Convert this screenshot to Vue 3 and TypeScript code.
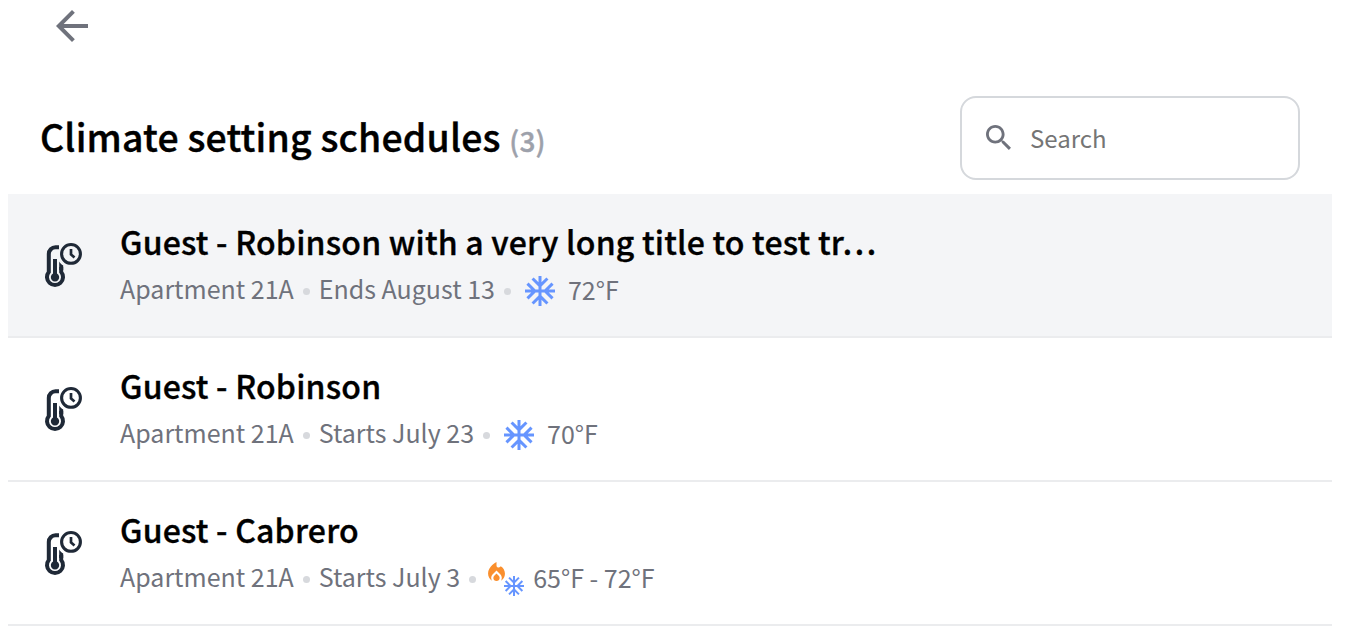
<script setup lang="ts">
import { ref } from 'vue'

interface Schedule {
  id: number
  title: string
  device: string
  timing: string
  mode: 'cool' | 'heatcool'
  temperature: string
  selected?: boolean
}

const query = ref('')

const schedules: Schedule[] = [
  { id: 1, title: 'Guest - Robinson with a very long title to test tr…', device: 'Apartment 21A', timing: 'Ends August 13', mode: 'cool', temperature: '72°F', selected: true },
  { id: 2, title: 'Guest - Robinson', device: 'Apartment 21A', timing: 'Starts July 23', mode: 'cool', temperature: '70°F' },
  { id: 3, title: 'Guest - Cabrero', device: 'Apartment 21A', timing: 'Starts July 3', mode: 'heatcool', temperature: '65°F - 72°F' },
]

const snowflake =
  'M22 11h-4.17l3.24-3.24-1.41-1.42L15 11h-2V9l4.66-4.66-1.42-1.41L13 6.17V2h-2v4.17L7.76 2.93 6.34 4.34 11 9v2H9L4.34 6.34 2.93 7.76 6.17 11H2v2h4.17l-3.24 3.24 1.41 1.42L9 13h2v2l-4.66 4.66 1.42 1.41L11 17.83V22h2v-4.17l3.24 3.24 1.42-1.41L13 15v-2h2l4.66 4.66 1.41-1.42L17.83 13H22z'
</script>

<template>
  <main class="page">
    <nav class="topbar">
      <button class="back" aria-label="Back">
        <svg width="48" height="48" viewBox="0 0 24 24"><path d="M20 11H7.83l5.59-5.59L12 4l-8 8 8 8 1.41-1.41L7.83 13H20v-2z" /></svg>
      </button>
    </nav>

    <header class="header">
      <h1 class="heading">Climate setting schedules <span class="count">(3)</span></h1>
      <label class="search">
        <svg class="search-icon" width="25" height="25" viewBox="3 3 17.5 17.5"><path d="M15.5 14h-.79l-.28-.27C15.41 12.59 16 11.11 16 9.5 16 5.91 13.09 3 9.5 3S3 5.91 3 9.5 5.91 16 9.5 16c1.61 0 3.09-.59 4.23-1.57l.27.28v.79l5 4.99L20.49 19l-4.99-5zm-6 0C7.01 14 5 11.99 5 9.5S7.01 5 9.5 5 14 7.01 14 9.5 11.99 14 9.5 14z" /></svg>
        <input v-model="query" class="search-input" type="text" placeholder="Search" />
      </label>
    </header>

    <ul class="list">
      <li v-for="s in schedules" :key="s.id" class="row" :class="{ selected: s.selected }">
        <svg class="device-icon" width="48" height="48" viewBox="0 0 48 48" fill="none">
          <path d="M19 6.3H15.5A6.7 6.7 0 0 0 8.8 13V31A8 8 0 1 0 21.2 31V26" stroke="#1f2937" stroke-width="4" />
          <path d="M19.2 20.5C20.2 22.3 21.5 23.6 23.2 24.6V29H19.2Z" fill="#1f2937" />
          <path d="M13 18H17V32.6A4.2 4.2 0 1 1 13 32.6Z" fill="#1f2937" />
          <circle cx="31" cy="12.9" r="9.4" stroke="#1f2937" stroke-width="3.1" />
          <path d="M31 8V13.4L34.5 16.5" stroke="#1f2937" stroke-width="2.7" />
        </svg>
        <div class="content">
          <h2 class="title">{{ s.title }}</h2>
          <div class="meta">
            <span class="label">{{ s.device }}</span>
            <i class="dot"></i>
            <span class="label">{{ s.timing }}</span>
            <i class="dot"></i>
            <svg v-if="s.mode === 'cool'" class="cool" width="30" height="30" viewBox="2 2 20 20"><path :d="snowflake" fill="#6695ff" /></svg>
            <span v-else class="heatcool">
              <svg class="flame" width="17" height="19" viewBox="4 2 16 18"><path fill="#fa8f2d" d="M16 6l-.44.55C14.38 8.02 12 7.19 12 5.3V2S4 6 4 13c0 2.92 1.56 5.47 3.89 6.86-.56-.79-.89-1.76-.89-2.8 0-1.32.52-2.56 1.47-3.5L12 10.1l3.53 3.47c.95.93 1.47 2.17 1.47 3.5 0 1.02-.31 1.96-.85 2.75 1.89-1.15 3.29-3.06 3.71-5.3.66-3.55-1.07-6.9-3.86-8.52zM12 12.9l-2.13 2.09c-.56.56-.87 1.29-.87 2.07C9 18.68 10.35 20 12 20s3-1.32 3-2.94c0-.78-.31-1.52-.87-2.07L12 12.9z" /></svg>
              <svg class="flake" width="20" height="20" viewBox="2 2 20 20"><path :d="snowflake" fill="#6695ff" /></svg>
            </span>
            <span class="temperature">{{ s.temperature }}</span>
          </div>
        </div>
      </li>
    </ul>
  </main>
</template>

<style>
body {
  margin: 0;
  background: #fff;
}
</style>

<style scoped>
.page {
  box-sizing: border-box;
  width: 1356px;
  height: 630px;
  overflow: hidden;
  padding: 2px 24px 0 8px;
  background: #fff;
  color: #000;
  font-family: "Noto Sans CJK SC", "Noto Sans", sans-serif;
}
.topbar {
  height: 94px;
  padding-left: 40px;
}
.back {
  display: block;
  padding: 0;
  border: 0;
  background: none;
}
.back svg {
  display: block;
  fill: #6f727c;
}
.header {
  display: flex;
  align-items: center;
  justify-content: space-between;
  height: 84px;
  margin-bottom: 14px;
  padding: 0 32px;
}
.heading {
  margin: 0;
  font-size: 37.4px;
  line-height: 48px;
  font-weight: 500;
  letter-spacing: 0.18px;
  white-space: nowrap;
  -webkit-text-stroke: 0.4px currentColor;
}
.count {
  font-size: 28px;
  color: #9da1ab;
}
.search {
  box-sizing: border-box;
  display: flex;
  align-items: center;
  width: 340px;
  height: 84px;
  padding-left: 23.6px;
  border: 2px solid #d5d8dc;
  border-radius: 16px;
}
.search-icon {
  flex: none;
  margin-bottom: 1px;
  fill: #6f727c;
}
.search-input {
  width: 240px;
  margin-left: 19.4px;
  padding: 0;
  border: 0;
  outline: 0;
  background: none;
  font: 400 24px/40px "Noto Sans CJK SC", "Noto Sans", sans-serif;
}
.search-input::placeholder {
  color: #757575;
  opacity: 1;
}
.list {
  margin: 0;
  padding: 0;
  list-style: none;
}
.row {
  box-sizing: border-box;
  display: flex;
  align-items: center;
  height: 144px;
  padding-left: 32px;
  border-bottom: 2px solid #ebecee;
}
.row.selected {
  background: #f4f5f7;
}
.device-icon {
  flex: none;
}
.content {
  margin-left: 32px;
}
.title {
  margin: 0;
  padding-bottom: 2px;
  font-size: 32px;
  line-height: 46px;
  font-weight: 500;
  letter-spacing: 0.2px;
  white-space: nowrap;
  -webkit-text-stroke: 0.35px currentColor;
}
.meta {
  display: flex;
  align-items: center;
  height: 46px;
  font-size: 25px;
  line-height: 44px;
  color: #6f727c;
  white-space: nowrap;
}
.label {
  padding-bottom: 2px;
}
.dot {
  width: 7px;
  height: 7px;
  margin: 4px 9px 0;
  border-radius: 50%;
  background: #d7d9dd;
}
.cool {
  margin: 3px 13px 0 5px;
}
.heatcool {
  display: flex;
  margin: 3px 9px 0 2px;
}
.flame {
  margin: 1px 0 15px 0.5px;
}
.flake {
  margin: 15px 0 0 -0.5px;
}
.temperature {
  height: 44px;
}
</style>
